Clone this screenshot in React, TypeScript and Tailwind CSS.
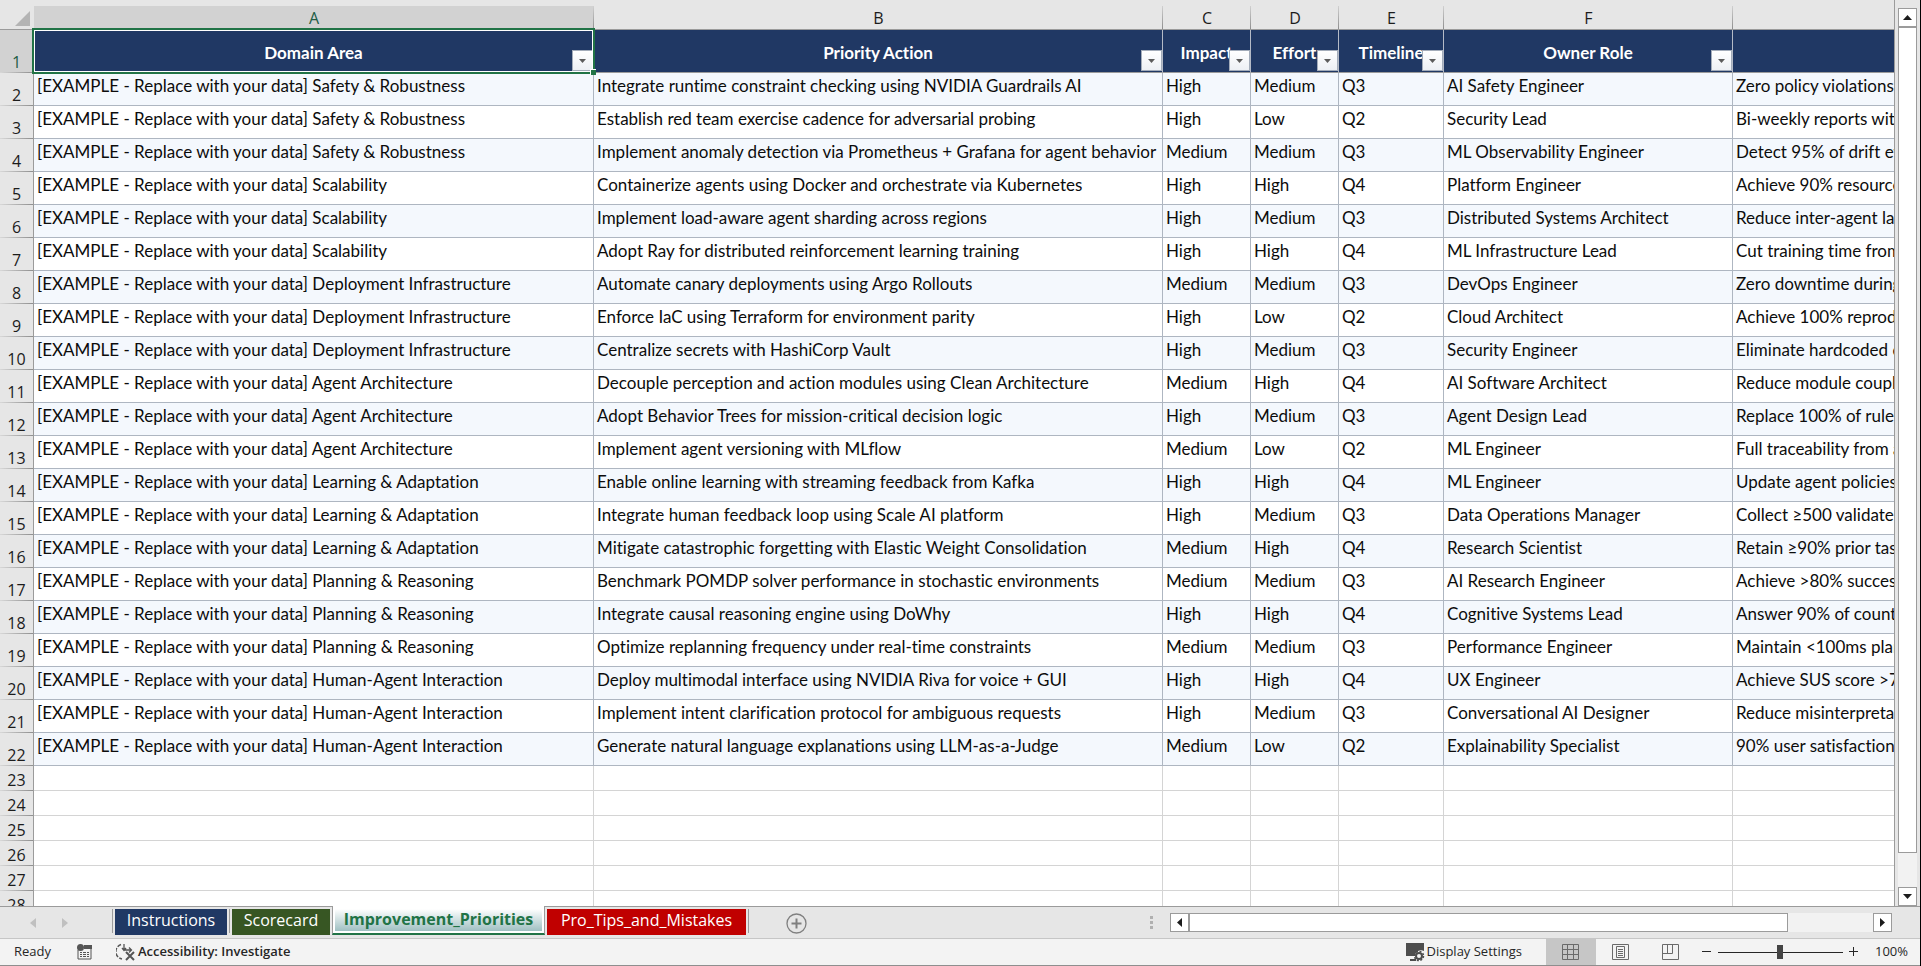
import type { ReactNode } from "react"

const columns = [
  { letter: "A", label: "Domain Area", width: "w-[560px]" },
  { letter: "B", label: "Priority Action", width: "w-[569px]" },
  { letter: "C", label: "Impact", width: "w-[88px]" },
  { letter: "D", label: "Effort", width: "w-[88px]" },
  { letter: "E", label: "Timeline", width: "w-[105px]" },
  { letter: "F", label: "Owner Role", width: "w-[289px]" },
  { letter: "", label: "", width: "" },
]

const rows = [
  ["Safety & Robustness", "Integrate runtime constraint checking using NVIDIA Guardrails AI", "High", "Medium", "Q3", "AI Safety Engineer", "Zero policy violations"],
  ["Safety & Robustness", "Establish red team exercise cadence for adversarial probing", "High", "Low", "Q2", "Security Lead", "Bi-weekly reports with"],
  ["Safety & Robustness", "Implement anomaly detection via Prometheus + Grafana for agent behavior", "Medium", "Medium", "Q3", "ML Observability Engineer", "Detect 95% of drift events"],
  ["Scalability", "Containerize agents using Docker and orchestrate via Kubernetes", "High", "High", "Q4", "Platform Engineer", "Achieve 90% resource"],
  ["Scalability", "Implement load-aware agent sharding across regions", "High", "Medium", "Q3", "Distributed Systems Architect", "Reduce inter-agent latency"],
  ["Scalability", "Adopt Ray for distributed reinforcement learning training", "High", "High", "Q4", "ML Infrastructure Lead", "Cut training time from"],
  ["Deployment Infrastructure", "Automate canary deployments using Argo Rollouts", "Medium", "Medium", "Q3", "DevOps Engineer", "Zero downtime during"],
  ["Deployment Infrastructure", "Enforce IaC using Terraform for environment parity", "High", "Low", "Q2", "Cloud Architect", "Achieve 100% reproducible"],
  ["Deployment Infrastructure", "Centralize secrets with HashiCorp Vault", "High", "Medium", "Q3", "Security Engineer", "Eliminate hardcoded credentials"],
  ["Agent Architecture", "Decouple perception and action modules using Clean Architecture", "Medium", "High", "Q4", "AI Software Architect", "Reduce module coupling"],
  ["Agent Architecture", "Adopt Behavior Trees for mission-critical decision logic", "High", "Medium", "Q3", "Agent Design Lead", "Replace 100% of rule-based"],
  ["Agent Architecture", "Implement agent versioning with MLflow", "Medium", "Low", "Q2", "ML Engineer", "Full traceability from agent"],
  ["Learning & Adaptation", "Enable online learning with streaming feedback from Kafka", "High", "High", "Q4", "ML Engineer", "Update agent policies"],
  ["Learning & Adaptation", "Integrate human feedback loop using Scale AI platform", "High", "Medium", "Q3", "Data Operations Manager", "Collect ≥500 validated"],
  ["Learning & Adaptation", "Mitigate catastrophic forgetting with Elastic Weight Consolidation", "Medium", "High", "Q4", "Research Scientist", "Retain ≥90% prior task"],
  ["Planning & Reasoning", "Benchmark POMDP solver performance in stochastic environments", "Medium", "Medium", "Q3", "AI Research Engineer", "Achieve >80% success"],
  ["Planning & Reasoning", "Integrate causal reasoning engine using DoWhy", "High", "High", "Q4", "Cognitive Systems Lead", "Answer 90% of counterfactual"],
  ["Planning & Reasoning", "Optimize replanning frequency under real-time constraints", "Medium", "Medium", "Q3", "Performance Engineer", "Maintain <100ms planning"],
  ["Human-Agent Interaction", "Deploy multimodal interface using NVIDIA Riva for voice + GUI", "High", "High", "Q4", "UX Engineer", "Achieve SUS score >75"],
  ["Human-Agent Interaction", "Implement intent clarification protocol for ambiguous requests", "High", "Medium", "Q3", "Conversational AI Designer", "Reduce misinterpretation"],
  ["Human-Agent Interaction", "Generate natural language explanations using LLM-as-a-Judge", "Medium", "Low", "Q2", "Explainability Specialist", "90% user satisfaction"],
]

const emptyRows = [23, 24, 25, 26, 27, 28]

function RowNumber({ n, selected = false }: { n: number; selected?: boolean }) {
  return (
    <th
      scope="row"
      className={`relative border-r border-[#9b9b9b] p-0 pb-px align-bottom text-center text-base leading-5 font-normal ${
        selected ? "bg-[#d2d2d2] text-[#215c45]" : "bg-[#e6e6e6] text-[#1c1c1c]"
      }`}
    >
      {n}
      <div className="absolute inset-x-0 bottom-0 h-px bg-linear-to-r from-[#d8d8d8] to-[#8f8f8f]" />
    </th>
  )
}

function FilterButton({ label }: { label: string }) {
  return (
    <button
      aria-label={`Filter ${label}`}
      className="absolute right-0 bottom-px flex size-[21px] items-center justify-center border border-[#a3acba] bg-linear-to-b from-white to-[#edf0f5]"
    >
      <svg width="7" height="4" viewBox="0 0 7 4">
        <path d="M0 0h7L3.5 4z" fill="#5c5c5c" />
      </svg>
    </button>
  )
}

function Sheet() {
  return (
    <div className="min-w-0 flex-1 overflow-hidden border-r border-[#9b9b9b] bg-white">
      <table className="w-full table-fixed border-separate border-spacing-0 whitespace-nowrap [font-variant-ligatures:none]">
        <colgroup>
          <col className="w-[34px]" />
          {columns.map((c, i) => (
            <col key={i} className={c.width} />
          ))}
        </colgroup>
        <thead>
          <tr className="h-[30px] bg-[#e6e6e6]">
            <td className="relative border-b border-[#9b9b9b] p-0">
              <svg className="absolute right-1 bottom-[3px]" width="15" height="15" viewBox="0 0 15 15">
                <path d="M15 0v15H0z" fill="#b4b4b4" />
              </svg>
            </td>
            {columns.map((c, i) => (
              <th key={i} scope="col" className="relative border-b border-[#9b9b9b] p-0 pt-1.5 text-base font-normal">
                <div className={`h-[23px] leading-6 ${i === 0 ? "bg-[#d2d2d2] text-[#215c45]" : "text-[#1c1c1c]"}`}>
                  {c.letter}
                </div>
                {i < 6 && (
                  <div className="absolute right-0 bottom-0 h-[23px] w-px bg-linear-to-b from-[#d0d0d0] to-[#8f8f8f]" />
                )}
              </th>
            ))}
          </tr>
        </thead>
        <tbody>
          <tr className="h-[43px]">
            <RowNumber n={1} selected />
            {columns.map((c, i) => (
              <th
                key={i}
                scope="col"
                className={`relative border-b border-[#9b9b9b] bg-[#203864] p-0 pt-1 text-center font-[Lato] text-[17px] leading-5 font-bold text-white ${
                  i < 6 ? "border-r border-r-[#b4bac6]" : ""
                }`}
              >
                {c.label}
                {c.label && <FilterButton label={c.label} />}
                {i === 0 && (
                  <div className="pointer-events-none absolute -inset-0.5 z-10 border-2 border-[#217346]">
                    <div className="h-full border border-white" />
                    <div className="absolute -right-[3px] -bottom-[3px] size-[6px] border-t border-l border-white bg-[#217346]" />
                  </div>
                )}
              </th>
            ))}
          </tr>
          {rows.map((row, r) => (
            <tr key={r} className={`h-[33px] ${r % 2 === 0 ? "bg-[#f4f8fd]" : "bg-white"}`}>
              <RowNumber n={r + 2} />
              {row.map((cell, i) => (
                <td
                  key={i}
                  className={`overflow-hidden border-b border-[#aeb6c1] p-0 pb-1.5 pl-[3px] font-[Lato] text-[17px] leading-5 text-[#0c0c0c] ${
                    i < 6 ? "border-r" : ""
                  }`}
                >
                  {i === 0 ? `[EXAMPLE - Replace with your data] ${cell}` : cell}
                </td>
              ))}
            </tr>
          ))}
          {emptyRows.map((n) => (
            <tr key={n} className="h-[25px]">
              <RowNumber n={n} />
              {columns.map((_, i) => (
                <td key={i} className={`border-b border-[#d4d4d4] p-0 ${i < 6 ? "border-r" : ""}`} />
              ))}
            </tr>
          ))}
        </tbody>
      </table>
    </div>
  )
}

function ScrollButton({ label, d }: { label: string; d: string }) {
  return (
    <button
      aria-label={label}
      className="flex size-[19px] shrink-0 items-center justify-center border border-[#9b9b9b] bg-white"
    >
      <svg width="9" height="9" viewBox="0 0 9 9">
        <path d={d} fill="#1c1c1c" />
      </svg>
    </button>
  )
}

function VerticalScroll() {
  return (
    <div className="flex w-[25px] shrink-0 flex-col pt-2 pl-[3px]">
      <ScrollButton label="Scroll up" d="M0 7h9L4.500 2z" />
      <div className="w-[19px] flex-1 bg-[#f2f2f2]">
        <div className="h-[96%] border border-[#9b9b9b] bg-white" />
      </div>
      <ScrollButton label="Scroll down" d="M0 2h9L4.500 7z" />
    </div>
  )
}

function Tab({ className, children }: { className: string; children: ReactNode }) {
  return (
    <button role="tab" className={`h-[26px] pb-1 text-base leading-[22px] text-white ${className}`}>
      {children}
    </button>
  )
}

function Divider() {
  return <div className="mx-0.5 h-6 w-px bg-[#9b9b9b]" />
}

function TabBar() {
  return (
    <div className="flex h-8 shrink-0 items-start border-b border-[#c6c6c6] bg-[#e6e6e6]">
      <div className="flex h-full w-[110px] items-center gap-[26px] pl-[30px]">
        <button aria-label="Previous sheet">
          <svg width="6" height="10" viewBox="0 0 6 10">
            <path d="M6 0v10L0 5z" fill="#c0c0c0" />
          </svg>
        </button>
        <button aria-label="Next sheet">
          <svg width="6" height="10" viewBox="0 0 6 10">
            <path d="M0 0v10l6-5z" fill="#c0c0c0" />
          </svg>
        </button>
      </div>
      <div role="tablist" className="flex items-start pt-0.5">
        <Divider />
        <Tab className="w-[112px] bg-[#203864]">Instructions</Tab>
        <Divider />
        <Tab className="w-[98px] bg-[#375623]">Scorecard</Tab>
        <button
          role="tab"
          aria-selected
          className="-mt-[3px] ml-0.5 h-[29px] w-[213px] border-x border-b-2 border-x-[#9b9b9b] border-b-[#217346] bg-white px-0.5 pt-[3px] pb-0.5"
        >
          <div className="h-[22px] bg-linear-to-b from-white to-[#9fc0c2] text-base leading-5 font-bold text-[#217346]">
            Improvement_Priorities
          </div>
        </button>
        <Tab className="ml-0.5 w-[199px] bg-[#c00000]">Pro_Tips_and_Mistakes</Tab>
        <Divider />
      </div>
      <button aria-label="New sheet" className="mt-1.5 ml-[35px]">
        <svg width="21" height="21" viewBox="0 0 21 21" fill="none" stroke="#808080">
          <circle cx="10.500" cy="10.500" r="9.500" strokeWidth="1.300" />
          <path d="M5.500 10.500h10M10.500 5.500v10" strokeWidth="2" />
        </svg>
      </button>
      <div className="mt-[9px] ml-auto flex w-[3px] flex-col gap-0.5">
        <div className="size-[3px] bg-[#b0b0b0]" />
        <div className="size-[3px] bg-[#b0b0b0]" />
        <div className="size-[3px] bg-[#b0b0b0]" />
      </div>
      <div className="mt-1.5 mr-[28px] ml-[17px] flex w-[722px]">
        <ScrollButton label="Scroll left" d="M7 0v9L2 4.500z" />
        <div className="flex-1 bg-[#f2f2f2]">
          <div className="h-[19px] w-7/8 border border-[#9b9b9b] bg-white" />
        </div>
        <ScrollButton label="Scroll right" d="M2 0v9l5-4.500z" />
      </div>
    </div>
  )
}

function StatusBar() {
  return (
    <div className="flex h-[27px] shrink-0 items-center border-b border-[#8e8e8e] bg-[#f3f3f3] text-[13px] text-[#262626]">
      <span className="ml-3.5 w-[63px]">Ready</span>
      <button aria-label="Record macro">
        <svg width="15" height="16" viewBox="0 0 15 16" fill="none">
          <path d="M1 6v9h13V2H7" stroke="#555" />
          <path d="M7 1h8v4H7z" fill="#555" />
          <circle cx="3.500" cy="3.500" r="3.500" fill="#555" />
          <path d="M3 8.500h2m1 0h3m1 0h2M3 10.500h2m1 0h3m1 0h2M3 12.500h2m1 0h3m1 0h2" stroke="#555" />
        </svg>
      </button>
      <button className="ml-6 flex items-center gap-[3px] font-semibold">
        <svg width="19" height="18" viewBox="0 0 19 18" fill="none" stroke="#555">
          <path d="M5 1.500A7.500 7.500 0 0 0 6 16" strokeWidth="1.500" strokeDasharray="4 1.500" />
          <path d="M8 1v6h7M6 5l2 2.500L10 5M13 4.500L15.500 7 13 9.500" strokeWidth="1.300" />
          <path d="M10 9l8 8M18 9l-8 8" strokeWidth="2" />
        </svg>
        Accessibility: Investigate
      </button>
      <button className="ml-auto flex items-center gap-px">
        <svg width="20" height="19" viewBox="0 0 20 19" fill="none">
          <path d="M1 0h18v8a6 6 0 0 0-9 5H1zM5 16h6v2H5z" fill="#4d4d4d" />
          <circle cx="14" cy="13" r="3" stroke="#4d4d4d" strokeWidth="2" />
          <circle cx="14" cy="13" r="4.500" stroke="#4d4d4d" strokeWidth="1.500" strokeDasharray="2 1.530" />
        </svg>
        Display Settings
      </button>
      <div className="ml-6 flex h-full">
        <button aria-label="Normal view" className="flex w-[50px] items-center justify-center bg-[#c6c6c6]">
          <svg width="17" height="16" viewBox="0 0 17 16" fill="none" stroke="#6a6a6a">
            <path d="M.5.500h16v15H.5zM.5 5.500h16M.5 10.500h16M5.500.500v15M11.500.500v15" />
          </svg>
        </button>
        <button aria-label="Page layout" className="flex w-[50px] items-center justify-center">
          <svg width="17" height="16" viewBox="0 0 17 16" fill="none" stroke="#6a6a6a">
            <path d="M.5.500h16v15H.5zM4.500 2.500h8v11h-8zM6 5.500h5M6 7.500h5M6 9.500h5M6 11.500h5" />
          </svg>
        </button>
        <button aria-label="Page break preview" className="flex w-[50px] items-center justify-center">
          <svg width="17" height="16" viewBox="0 0 17 16" fill="none" stroke="#6a6a6a">
            <path d="M.5.500h16v15H.5zM5.500.500v9M.5 9.500h10v-9" />
          </svg>
        </button>
      </div>
      <button aria-label="Zoom out" className="ml-1.5">
        <svg width="10" height="10" viewBox="0 0 10 10" stroke="#262626">
          <path d="M0 4.500h9" />
        </svg>
      </button>
      <input
        type="range"
        aria-label="Zoom"
        defaultValue={50}
        className="mx-1.5 h-4 w-[125px] appearance-none bg-transparent [&::-webkit-slider-runnable-track]:h-px [&::-webkit-slider-runnable-track]:bg-[#262626] [&::-webkit-slider-thumb]:-mt-[7px] [&::-webkit-slider-thumb]:h-3.5 [&::-webkit-slider-thumb]:w-[6px] [&::-webkit-slider-thumb]:appearance-none [&::-webkit-slider-thumb]:bg-[#444444]"
      />
      <button aria-label="Zoom in">
        <svg width="10" height="10" viewBox="0 0 10 10" stroke="#262626">
          <path d="M0 4.500h9M4.500 0v9" />
        </svg>
      </button>
      <span className="mr-3 ml-4">100%</span>
    </div>
  )
}

export default function App() {
  return (
    <div className="flex h-screen flex-col overflow-hidden border-r border-black bg-[#e6e6e6] font-['Open_Sans',sans-serif]">
      <div className="flex min-h-0 flex-1 border-b border-[#9b9b9b]">
        <Sheet />
        <VerticalScroll />
      </div>
      <TabBar />
      <StatusBar />
    </div>
  )
}
